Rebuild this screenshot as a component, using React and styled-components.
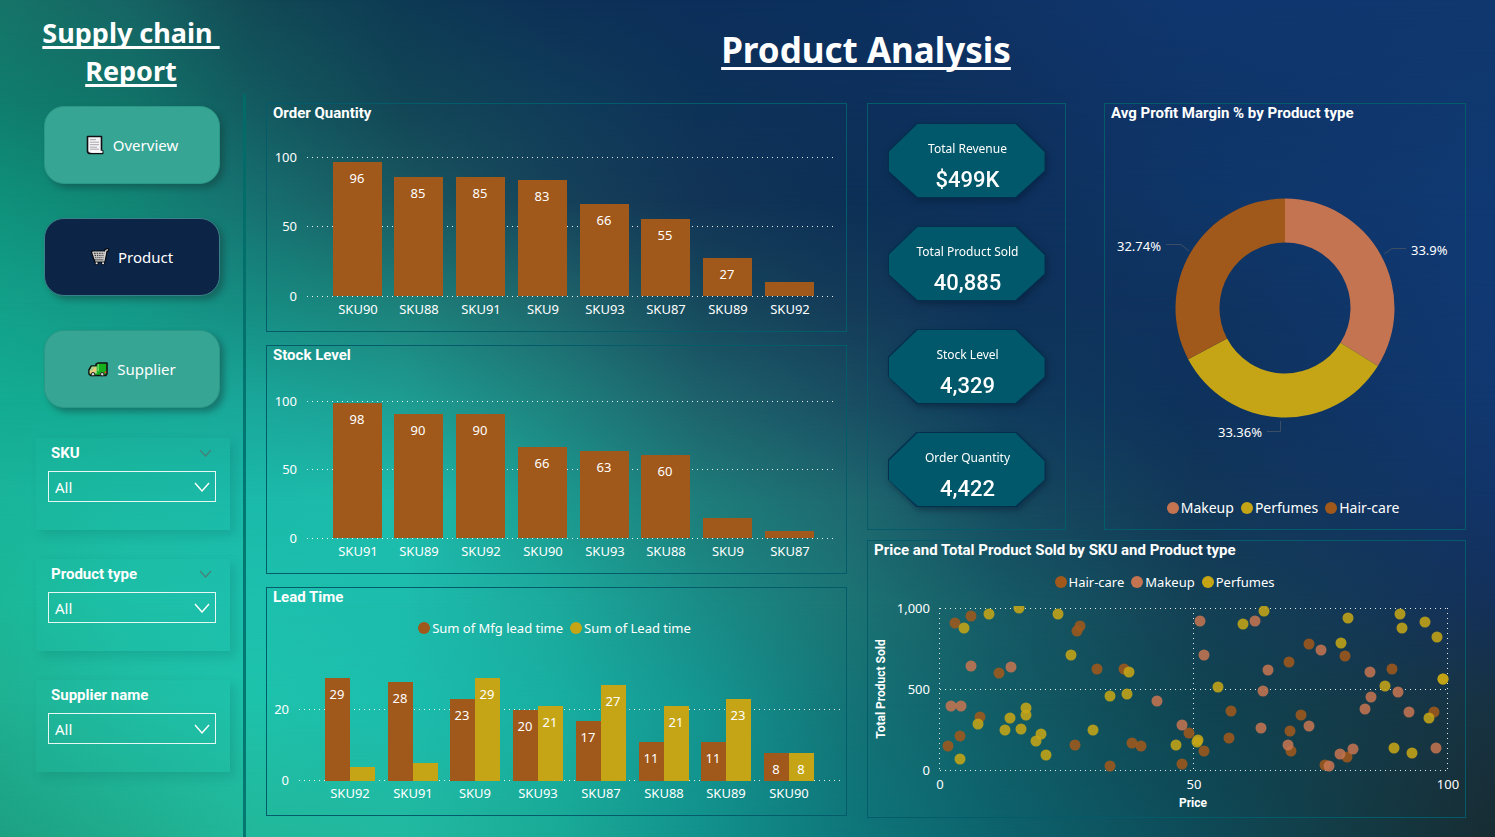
import React from "react";
import styled, { createGlobalStyle } from "styled-components";

const UI = `"Noto Sans", "Open Sans", sans-serif`;
const DIN = `Roboto, "Liberation Sans", sans-serif`;

const COLORS = {
  rust: "#a0581b",
  gold: "#c5a516",
  clay: "#c47450",
  edge: "#045c6a",
  kpi: "#00586a",
};

const GlobalStyle = createGlobalStyle`
  *, *::before, *::after { box-sizing: border-box; }
  body { margin: 0; background: #0e3056; font-family: ${UI}; color: #fff; }
`;

/* ---------- Backdrop: colour rows blended into each other vertically ---------- */

const STOPS = [0, 9, 17, 27, 37, 47, 57, 67, 80, 100];

const ROWS = [
  [0, ["#167468", "#166464", "#124a55", "#0d3a54", "#0d3157", "#0c2f5b", "#0c305f", "#0f3365", "#103770", "#10386f"]],
  [12, ["#107d6e", "#117268", "#135a60", "#124556", "#103c59", "#0d3258", "#0d305b", "#0e3160", "#0f3569", "#103970"]],
  [24, ["#0f917c", "#128474", "#177070", "#1a5860", "#16425a", "#123456", "#0c3056", "#0e305c", "#0f3668", "#103973"]],
  [36, ["#13a089", "#149786", "#168b81", "#1d8079", "#1e666c", "#16485c", "#143a58", "#0e325a", "#0f335f", "#113973"]],
  [48, ["#13ac92", "#16a995", "#1aa79a", "#1e9d93", "#1e827e", "#1e626c", "#194e62", "#103a5c", "#0e325c", "#113870"]],
  [60, ["#1ab59b", "#1bb9a3", "#1bbaaa", "#1ebdad", "#1c9b91", "#1e7d7a", "#1e6970", "#164b60", "#123758", "#123468"]],
  [72, ["#1bb898", "#1dbfa8", "#1dc0ad", "#1dbcad", "#1caa9d", "#1a8c87", "#1c7373", "#165a66", "#144155", "#14305a"]],
  [84, ["#1fb092", "#1fbca2", "#1ec2ab", "#1cbdae", "#18afa2", "#149691", "#147376", "#125c66", "#104452", "#183242"]],
  [100, ["#1da082", "#20ac8d", "#22b79a", "#22b89f", "#1aaa96", "#12918c", "#0e767a", "#0c626c", "#0e4b58", "#182c32"]],
];

const Backdrop = styled.div`
  position: absolute;
  inset: 0;
  z-index: -1;
`;

const Band = styled.div`
  position: absolute;
  inset: 0;
  background: linear-gradient(to right, ${(p) => p.$colors.map((c, i) => `${c} ${STOPS[i]}%`).join(", ")});
  mask-image: ${(p) =>
    p.$from === null ? "none" : `linear-gradient(to bottom, transparent ${p.$from}%, #000 ${p.$to}%)`};
`;

/* ---------- Page frame ---------- */

const Page = styled.div`
  position: relative;
  isolation: isolate;
  min-height: 100vh;
  display: grid;
  grid-template-columns: 246px 1fr;
  grid-template-rows: 94px 1fr;
`;

const Brand = styled.div`
  padding: 14px 0 0 16px;
  font-weight: 700;
  font-size: 27px;
  line-height: 38px;
  text-align: center;
  text-decoration: underline;
  text-decoration-thickness: 3px;
  text-underline-offset: 3px;
  text-decoration-skip-ink: none;
`;

const Header = styled.header`
  padding: 20px 9px 0 0;
  text-align: center;
`;

const Title = styled.h1`
  margin: 0;
  font-size: 35px;
  line-height: 60px;
  font-weight: 700;
  text-decoration: underline;
  text-decoration-thickness: 3px;
  text-underline-offset: 4px;
  text-decoration-skip-ink: none;
`;

const Sidebar = styled.aside`
  border-right: 3px solid rgba(0, 108, 104, 0.85);
  padding: 12px 13px 0 36px;
`;

const Nav = styled.nav`
  display: flex;
  flex-direction: column;
  gap: 34px;
  padding: 0 10px 0 8px;
`;

const NavButton = styled.button`
  height: 78px;
  display: flex;
  align-items: center;
  justify-content: center;
  gap: 9px;
  border-radius: 20px;
  border: 1px solid ${(p) => (p.$active ? "#3b7f88" : "#2b9886")};
  background: ${(p) => (p.$active ? "#0c2446" : "#37a594")};
  box-shadow: 4px 4px 6px rgba(20, 60, 60, 0.45);
  color: #fff;
  font-family: ${UI};
  font-size: 15px;
  line-height: 20px;
  cursor: pointer;
`;

const Slicers = styled.div`
  display: flex;
  flex-direction: column;
  gap: 29px;
  margin-top: 30px;
`;

const SlicerCard = styled.div`
  height: 92px;
  padding: 5px 14px 0 12px;
  background: rgba(30, 195, 172, 0.12);
  box-shadow: 5px 5px 10px rgba(10, 90, 85, 0.2);
`;

const SlicerHead = styled.div`
  display: flex;
  align-items: center;
  justify-content: space-between;
  height: 20px;
  margin-bottom: 8px;
  padding: 0 4px 0 3px;
`;

const SlicerLabel = styled.label`
  font-family: ${DIN};
  font-weight: 700;
  font-size: 15px;
  line-height: 20px;
`;

const SelectBox = styled.div`
  position: relative;
  svg {
    position: absolute;
    right: 6px;
    top: 11px;
    pointer-events: none;
  }
`;

const Select = styled.select`
  appearance: none;
  display: block;
  width: 100%;
  height: 31px;
  padding: 0 6px;
  border: 1px solid #e6f7f4;
  border-radius: 0;
  background: transparent;
  color: #fff;
  font-family: ${UI};
  font-size: 15px;
`;

/* ---------- Panels ---------- */

const Board = styled.main`
  display: grid;
  grid-template-columns: minmax(0, 581fr) minmax(0, 599fr);
  column-gap: 20px;
  align-items: start;
  padding: 9px 29px 20px 20px;
`;

const LeftColumn = styled.div`
  display: flex;
  flex-direction: column;
  gap: 13px;
`;

const RightColumn = styled.div`
  display: flex;
  flex-direction: column;
  gap: 10px;
`;

const TopRow = styled.div`
  display: grid;
  grid-template-columns: minmax(0, 199fr) minmax(0, 362fr);
  column-gap: 38px;
`;

const Panel = styled.section`
  border: 1px solid ${COLORS.edge};
`;

const PanelTitle = styled.h2`
  margin: 0;
  padding-left: 6px;
  height: 20px;
  font-family: ${DIN};
  font-weight: 700;
  font-size: 15px;
  line-height: 18px;
`;

const Chart = styled.svg`
  display: block;
  width: 100%;
  height: auto;
  text {
    fill: #fff;
    font-family: ${UI};
    font-size: 13px;
  }
  .axis-title {
    font-family: ${DIN};
    font-size: 12px;
    font-weight: 700;
  }
  .grid {
    stroke: rgba(255, 255, 255, 0.9);
    stroke-width: 1;
    stroke-dasharray: 1 4;
    fill: none;
  }
  .leader {
    stroke: #3d4d66;
    fill: none;
  }
`;

const KpiPanel = styled(Panel)`
  display: flex;
  flex-direction: column;
  align-items: center;
  gap: 28px;
  padding: 19px 0 21px;
`;

const KpiCard = styled.div`
  width: 158px;
  height: 75px;
  filter: drop-shadow(2px 3px 3px rgba(5, 25, 50, 0.5));
`;

const KPI_SHAPE = "polygon(29px 0, calc(100% - 29px) 0, 100% 28px, 100% 47px, calc(100% - 29px) 100%, 29px 100%, 0 47px, 0 28px)";

const KpiEdge = styled.div`
  height: 100%;
  padding: 1px;
  background: #062f4e;
  clip-path: ${KPI_SHAPE};
`;

const KpiFace = styled.div`
  height: 100%;
  padding: 15px 0 0 2px;
  background: ${COLORS.kpi};
  clip-path: ${KPI_SHAPE};
  text-align: center;
`;

const KpiLabel = styled.div`
  font-size: 12px;
  line-height: 20px;
`;

const KpiValue = styled.div`
  margin-top: 7px;
  font-family: ${DIN};
  font-weight: 500;
  font-size: 22px;
  line-height: 28px;
`;

const Legend = styled.ul`
  display: flex;
  justify-content: center;
  gap: 7px;
  margin: 0;
  padding: ${(p) => p.$pad};
  list-style: none;
  font-size: ${(p) => (p.$large ? 14 : 13)}px;
  line-height: 20px;
`;

const LegendItem = styled.li`
  display: flex;
  align-items: center;
  gap: 2px;
  &::before {
    content: "";
    width: 12px;
    height: 12px;
    border-radius: 50%;
    background: ${(p) => p.$color};
  }
`;

/* ---------- Icons ---------- */

const PageIcon = () => (
  <svg width="18" height="20" viewBox="0 0 18 20" aria-hidden="true">
    <path d="M1.5 1.5h14v14.2h1.2v2.8H4.5c-2 0-3-1-3-2.6z" fill="#f4f4f6" stroke="#101014" strokeWidth="1.6" strokeLinejoin="round" />
    <path d="M4.5 15.8h12v2H5.5z" fill="#fff" />
    <path d="M4 4.7h6M4 7.2h9M4 9.7h9M4 12.2h7M4 14.2h9" stroke="#aaa4ad" strokeWidth="1" />
  </svg>
);

const CartIcon = () => (
  <svg width="18" height="18" viewBox="0 0 18 18" aria-hidden="true">
    <g fill="none" strokeLinejoin="round" strokeLinecap="round">
      <path d="M1.8 4.2h12.4l-1.2 6.6H4zM16.4 1.8l-1.5.7-2 10.3H4.6M5.6 15.2h.1M12 15.2h.1" stroke="#05080d" strokeWidth="3.6" />
      <path d="M1.8 4.2h12.4l-1.2 6.6H4z" fill="#3a3a3c" stroke="#d5d3d0" strokeWidth="1.2" />
      <path d="M16.4 1.8l-1.5.7-2 10.3H4.6" stroke="#d5d3d0" strokeWidth="1.3" />
      <path d="M2.8 6.4h11M3.4 8.6h10M5 4.2l1 6.6M7.6 4.2l.3 6.6M10.2 4.2l-.3 6.6M12.4 4.2l-.8 6.6" stroke="#d5d3d0" strokeWidth="0.9" />
      <path d="M5.6 15.2h.1M12 15.2h.1" stroke="#e8e6e2" strokeWidth="2" />
    </g>
  </svg>
);

const TruckIcon = () => (
  <svg width="20" height="15" viewBox="0 0 20 15" aria-hidden="true">
    <path d="M8 2.2 10.2 1H19v10.5l-1.2 2H2.6L1 12V8l2.4-4H8z" fill="#16b01f" stroke="#111" strokeWidth="1.6" strokeLinejoin="round" />
    <path d="M3.8 4.6h5v6.8H1.8V8.2z" fill="#a9d08a" />
    <path d="M1.8 8.8h2.6l2-3.6h1.8v3.6l-3 2.6H1.8z" fill="#f0c878" />
    <path d="M9.6 2.4l1.2-.7v7.6H9.6z" fill="#7be276" />
    <path d="M16.6 9.4h1.8v1.8h-1.8z" fill="#e83a2a" />
    <circle cx="5" cy="12.2" r="1.7" fill="#ddd" stroke="#222" />
    <circle cx="14.2" cy="12.2" r="1.7" fill="#ddd" stroke="#222" />
  </svg>
);

const Chevron = ({ w, h, color, weight }) => (
  <svg width={w} height={h} viewBox={`0 0 ${w} ${h}`} fill="none" aria-hidden="true">
    <path d={`M1 1 L${w / 2} ${h - 1} L${w - 1} 1`} stroke={color} strokeWidth={weight} />
  </svg>
);

/* ---------- Charts ---------- */

const LEFT_W = 579;
const LEFT_H = 207;
const BASE_Y = 173;

function GridLine({ y, from, to, label }) {
  return (
    <g>
      <line className="grid" x1={from} x2={to} y1={y - 0.5} y2={y - 0.5} />
      <text x={from - 10} y={y + 4} textAnchor="end">{label}</text>
    </g>
  );
}

function BarChart({ data, top, name }) {
  const unit = (BASE_Y - top) / 100;
  const step = 61.75;
  return (
    <Chart viewBox={`0 0 ${LEFT_W} ${LEFT_H}`} role="img" aria-label={name}>
      {[0, 50, 100].map((v) => (
        <GridLine key={v} y={Math.floor(BASE_Y - v * unit)} from={40} to={570} label={v} />
      ))}
      {data.map(([sku, value], i) => {
        const x = Math.floor(66 + i * step);
        const y = Math.floor(BASE_Y - value * unit) - 1;
        return (
          <g key={sku}>
            <rect x={x} y={y} width={49} height={BASE_Y - y - 1} fill={COLORS.rust} />
            {value > 20 && <text x={x + 24} y={y + 21} textAnchor="middle">{value}</text>}
            <text x={x + 25} y={BASE_Y + 17} textAnchor="middle">{sku}</text>
          </g>
        );
      })}
    </Chart>
  );
}

function LeadChart({ data }) {
  const unit = 3.55;
  const base = 138;
  return (
    <Chart viewBox={`0 0 ${LEFT_W} 172`} role="img" aria-label="Lead Time">
      {[0, 20].map((v) => (
        <GridLine key={v} y={Math.ceil(base - v * unit)} from={32} to={573} label={v} />
      ))}
      {data.map(([sku, mfg, lead], i) => {
        const x = Math.round(58 + i * 62.7);
        return (
          <g key={sku}>
            {[mfg, lead].map((v, k) => {
              const y = Math.round(base - v * unit);
              return (
                <g key={k}>
                  <rect x={x + k * 25} y={y} width={25} height={base - y} fill={k ? COLORS.gold : COLORS.rust} />
                  {v > 6 && <text x={x + k * 25 + 12} y={y + 21} textAnchor="middle">{v}</text>}
                </g>
              );
            })}
            <text x={x + 25} y={base + 17} textAnchor="middle">{sku}</text>
          </g>
        );
      })}
    </Chart>
  );
}

function Donut() {
  const cx = 180;
  const cy = 184;
  const R = 109.5;
  const r = 65.5;
  const slices = [
    [33.9, COLORS.clay],
    [33.36, COLORS.gold],
    [32.74, COLORS.rust],
  ];
  let start = 0;
  const at = (frac, rad) => {
    const a = frac * 2 * Math.PI;
    return `${cx + rad * Math.sin(a)} ${cy - rad * Math.cos(a)}`;
  };
  return (
    <Chart viewBox="0 0 360 372" role="img" aria-label="Avg Profit Margin % by Product type">
      {slices.map(([pct, color]) => {
        const a = start;
        const b = start + pct / 100;
        start = b;
        return (
          <path
            key={color}
            fill={color}
            d={`M${at(a, R)} A${R} ${R} 0 0 1 ${at(b, R)} L${at(b, r)} A${r} ${r} 0 0 0 ${at(a, r)} Z`}
          />
        );
      })}
      <path className="leader" d="M279 130 L287 124.500 H301" />
      <path className="leader" d="M84 127 L76 120.500 H61" />
      <path className="leader" d="M175.500 297 V307.500 H162" />
      <text x="306" y="131">33.9%</text>
      <text x="56" y="127" textAnchor="end">32.74%</text>
      <text x="157" y="313" textAnchor="end">33.36%</text>
    </Chart>
  );
}

/* Point positions inside the 508 x 162 plot area, one list per product type. */
const POINTS = [
  [COLORS.rust, [
    [15, 15], [31, 8], [140, 18], [137, 23], [59, 65], [157, 61], [184, 61], [40, 109], [20, 128], [8, 138],
    [135, 137], [192, 135], [201, 138], [170, 158], [242, 156], [369, 36], [405, 48], [349, 54], [452, 61], [494, 104],
    [291, 103], [289, 130], [361, 107], [350, 123], [351, 143], [249, 125], [264, 143], [385, 157], [407, 149],
  ]],
  [COLORS.clay, [
    [31, 58], [71, 59], [217, 93], [11, 98], [21, 98], [242, 117], [260, 13], [315, 13], [264, 47], [381, 42],
    [328, 62], [323, 83], [430, 64], [458, 84], [431, 89], [425, 101], [469, 104], [369, 118], [321, 120],
    [348, 137], [389, 158], [400, 146], [413, 141], [496, 140],
  ]],
  [COLORS.gold, [
    [24, 20], [49, 6], [79, 0], [118, 6], [131, 47], [189, 64], [170, 88], [187, 86], [86, 100], [86, 107],
    [38, 116], [70, 110], [65, 122], [81, 121], [101, 126], [96, 133], [106, 147], [20, 151], [153, 122], [236, 137],
    [303, 16], [324, 3], [408, 10], [401, 35], [460, 6], [462, 20], [485, 14], [497, 29], [278, 79], [445, 78],
    [489, 110], [503, 71], [503, 71], [258, 132], [257, 134], [454, 140], [472, 145],
  ]],
];

function Scatter() {
  const x0 = 72;
  const y0 = 16;
  return (
    <Chart viewBox="0 0 597 225" role="img" aria-label="Price and Total Product Sold by SKU and Product type">
      <defs>
        <clipPath id="plot">
          <rect x={x0 - 6} y={y0 - 2} width="516" height="172" />
        </clipPath>
      </defs>
      {[["1,000", 0], ["500", 81], ["0", 162]].map(([label, dy]) => (
        <GridLine key={label} y={y0 + dy + 1} from={x0} to={x0 + 508} label={label} />
      ))}
      {[["0", 0], ["50", 254], ["100", 508]].map(([label, dx]) => (
        <g key={label}>
          <line className="grid" x1={x0 + dx - 0.5} x2={x0 + dx - 0.5} y1={y0} y2={y0 + 162} />
          <text x={x0 + dx} y={y0 + 181} textAnchor="middle">{label}</text>
        </g>
      ))}
      <g clipPath="url(#plot)">
        {POINTS.map(([color, pts]) => (
          <g key={color} fill={color} fillOpacity="0.87">
            {pts.map(([x, y], i) => (
              <circle key={i} cx={x0 + x} cy={y0 + y} r="5.5" />
            ))}
          </g>
        ))}
      </g>
      <text className="axis-title" x={x0 + 253} y={y0 + 199} textAnchor="middle">Price</text>
      <text className="axis-title" transform={`translate(17 ${y0 + 81}) rotate(-90)`} textAnchor="middle">Total Product Sold</text>
    </Chart>
  );
}

/* ---------- Data ---------- */

const NAV = [
  ["Overview", PageIcon],
  ["Product", CartIcon],
  ["Supplier", TruckIcon],
];

const SLICERS = [
  ["SKU", true],
  ["Product type", true],
  ["Supplier name", false],
];

const KPIS = [
  ["Total Revenue", "$499K"],
  ["Total Product Sold", "40,885"],
  ["Stock Level", "4,329"],
  ["Order Quantity", "4,422"],
];

const ORDER = [["SKU90", 96], ["SKU88", 85], ["SKU91", 85], ["SKU9", 83], ["SKU93", 66], ["SKU87", 55], ["SKU89", 27], ["SKU92", 10]];
const STOCK = [["SKU91", 98], ["SKU89", 90], ["SKU92", 90], ["SKU90", 66], ["SKU93", 63], ["SKU88", 60], ["SKU9", 14], ["SKU87", 5]];
const LEAD = [["SKU92", 29, 4], ["SKU91", 28, 5], ["SKU9", 23, 29], ["SKU93", 20, 21], ["SKU87", 17, 27], ["SKU88", 11, 21], ["SKU89", 11, 23], ["SKU90", 8, 8]];

export default function App() {
  return (
    <Page>
      <GlobalStyle />
      <Backdrop aria-hidden="true">
        {ROWS.map(([at, colors], i) => (
          <Band key={at} $colors={colors} $from={i ? ROWS[i - 1][0] : null} $to={at} />
        ))}
      </Backdrop>

      <Brand>
        Supply chain&nbsp;
        <br />
        Report
      </Brand>
      <Header>
        <Title>Product Analysis</Title>
      </Header>

      <Sidebar>
        <Nav>
          {NAV.map(([label, Icon]) => (
            <NavButton key={label} type="button" $active={label === "Product"}>
              <Icon />
              {label}
            </NavButton>
          ))}
        </Nav>
        <Slicers>
          {SLICERS.map(([label, collapsible]) => (
            <SlicerCard key={label}>
              <SlicerHead>
                <SlicerLabel htmlFor={label}>{label}</SlicerLabel>
                {collapsible && <Chevron w={13} h={8} color="#4b7f76" weight={1.2} />}
              </SlicerHead>
              <SelectBox>
                <Select id={label} defaultValue="All">
                  <option>All</option>
                </Select>
                <Chevron w={16} h={10} color="#fff" weight={1.4} />
              </SelectBox>
            </SlicerCard>
          ))}
        </Slicers>
      </Sidebar>

      <Board>
        <LeftColumn>
          <Panel>
            <PanelTitle>Order Quantity</PanelTitle>
            <BarChart name="Order Quantity" data={ORDER} top={34} />
          </Panel>
          <Panel>
            <PanelTitle>Stock Level</PanelTitle>
            <BarChart name="Stock Level" data={STOCK} top={36} />
          </Panel>
          <Panel>
            <PanelTitle>Lead Time</PanelTitle>
            <Legend $pad="10px 4px 5px 0">
              <LegendItem $color={COLORS.rust}>Sum of Mfg lead time</LegendItem>
              <LegendItem $color={COLORS.gold}>Sum of Lead time</LegendItem>
            </Legend>
            <LeadChart data={LEAD} />
          </Panel>
        </LeftColumn>

        <RightColumn>
          <TopRow>
            <KpiPanel>
              {KPIS.map(([label, value]) => (
                <KpiCard key={label}>
                  <KpiEdge>
                    <KpiFace>
                      <KpiLabel>{label}</KpiLabel>
                      <KpiValue>{value}</KpiValue>
                    </KpiFace>
                  </KpiEdge>
                </KpiCard>
              ))}
            </KpiPanel>
            <Panel>
              <PanelTitle>Avg Profit Margin % by Product type</PanelTitle>
              <Donut />
              <Legend $large $pad="2px 4px 11px 0">
                <LegendItem $color={COLORS.clay}>Makeup</LegendItem>
                <LegendItem $color={COLORS.gold}>Perfumes</LegendItem>
                <LegendItem $color={COLORS.rust}>Hair-care</LegendItem>
              </Legend>
            </Panel>
          </TopRow>
          <Panel>
            <PanelTitle>Price and Total Product Sold by SKU and Product type</PanelTitle>
            <Legend $pad="11px 4px 0 0">
              <LegendItem $color={COLORS.rust}>Hair-care</LegendItem>
              <LegendItem $color={COLORS.clay}>Makeup</LegendItem>
              <LegendItem $color={COLORS.gold}>Perfumes</LegendItem>
            </Legend>
            <Scatter />
          </Panel>
        </RightColumn>
      </Board>
    </Page>
  );
}
